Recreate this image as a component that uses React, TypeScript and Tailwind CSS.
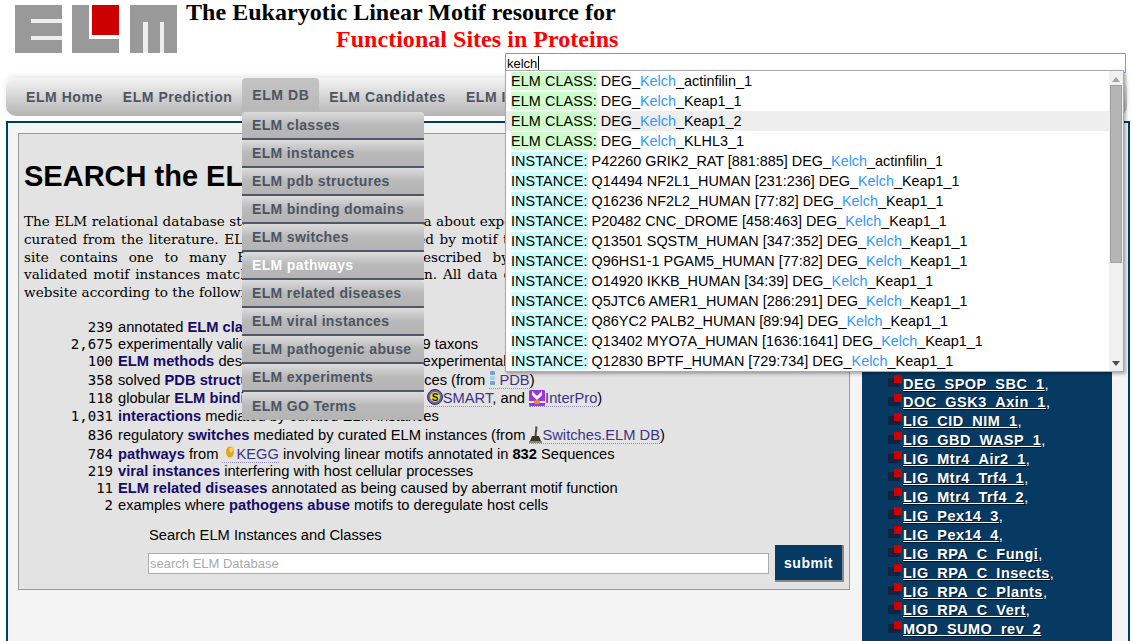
import { Fragment } from "react";

const navItems = ["ELM Home", "ELM Prediction", "ELM DB", "ELM Candidates", "ELM Interactions", "ELM Downloads"];

const menuItems = [
  "ELM classes",
  "ELM instances",
  "ELM pdb structures",
  "ELM binding domains",
  "ELM switches",
  "ELM pathways",
  "ELM related diseases",
  "ELM viral instances",
  "ELM pathogenic abuse",
  "ELM experiments",
  "ELM GO Terms",
];

const results = [
  { kind: "class", pre: "DEG_", post: "_actinfilin_1" },
  { kind: "class", pre: "DEG_", post: "_Keap1_1" },
  { kind: "class", pre: "DEG_", post: "_Keap1_2", active: true },
  { kind: "class", pre: "DEG_", post: "_KLHL3_1" },
  { kind: "inst", pre: "P42260 GRIK2_RAT [881:885] DEG_", post: "_actinfilin_1" },
  { kind: "inst", pre: "Q14494 NF2L1_HUMAN [231:236] DEG_", post: "_Keap1_1" },
  { kind: "inst", pre: "Q16236 NF2L2_HUMAN [77:82] DEG_", post: "_Keap1_1" },
  { kind: "inst", pre: "P20482 CNC_DROME [458:463] DEG_", post: "_Keap1_1" },
  { kind: "inst", pre: "Q13501 SQSTM_HUMAN [347:352] DEG_", post: "_Keap1_1" },
  { kind: "inst", pre: "Q96HS1-1 PGAM5_HUMAN [77:82] DEG_", post: "_Keap1_1" },
  { kind: "inst", pre: "O14920 IKKB_HUMAN [34:39] DEG_", post: "_Keap1_1" },
  { kind: "inst", pre: "Q5JTC6 AMER1_HUMAN [286:291] DEG_", post: "_Keap1_1" },
  { kind: "inst", pre: "Q86YC2 PALB2_HUMAN [89:94] DEG_", post: "_Keap1_1" },
  { kind: "inst", pre: "Q13402 MYO7A_HUMAN [1636:1641] DEG_", post: "_Keap1_1" },
  { kind: "inst", pre: "Q12830 BPTF_HUMAN [729:734] DEG_", post: "_Keap1_1" },
];

const sideLinks = [
  ["DEG_SPOP_SBC_1", ","],
  ["DOC_GSK3_Axin_1", ","],
  ["LIG_CID_NIM_1", ","],
  ["LIG_GBD_WASP_1", ","],
  ["LIG_Mtr4_Air2_1", ","],
  ["LIG_Mtr4_Trf4_1", ","],
  ["LIG_Mtr4_Trf4_2", ","],
  ["LIG_Pex14_3", ","],
  ["LIG_Pex14_4", ","],
  ["LIG_RPA_C_Fungi", ","],
  ["LIG_RPA_C_Insects", ","],
  ["LIG_RPA_C_Plants", ","],
  ["LIG_RPA_C_Vert", ","],
  ["MOD_SUMO_rev_2", ""],
];

const introLines = [
  "The ELM relational database stores functional motifs' data about experimentally validated motifs, which are manually",
  "curated from the literature. ELM classes are so described by motif types, each with a regular expression. Each one",
  "site contains one to many ELM motif's instances described by evidence from experiments, and these are",
  "validated motif instances matching a short protein region. All data can be browsed and searched anywhere on this",
];

function Logo() {
  return (
    <svg width="162" height="48" viewBox="0 0 162 48" className="block shrink-0">
      <rect x="0" y="0" width="47" height="48" fill="#999" />
      <rect x="16" y="14" width="31" height="4" fill="#eee" />
      <rect x="16" y="31" width="31" height="4" fill="#eee" />
      <rect x="57" y="0" width="47" height="48" fill="#999" />
      <rect x="74" y="0" width="30" height="34" fill="#fff" />
      <rect x="77" y="0" width="27" height="30" fill="#c00" />
      <rect x="115" y="0" width="47" height="48" fill="#999" />
      <rect x="128" y="17" width="5" height="31" fill="#eee" />
      <rect x="145" y="17" width="4" height="31" fill="#eee" />
    </svg>
  );
}

function Bullet() {
  return (
    <svg width="15" height="14" viewBox="0 0 15 14" className="-mt-[5px] shrink-0">
      <rect x="0" y="3" width="12" height="9" fill="#12233f" />
      <rect x="6" y="0" width="8" height="8" fill="#c00" />
    </svg>
  );
}

function Link({ children }: { children: string }) {
  return <a className="font-bold text-[#150b6b]">{children}</a>;
}

function ExtLink({ children }: { children: React.ReactNode }) {
  return <a className="border-b border-dotted border-[#8d88bd] text-[#3d3488]">{children}</a>;
}

function PdbIcon() {
  return (
    <svg width="8" height="17" viewBox="0 0 8 17" className="-my-1 mr-[2px] inline-block align-[1px]">
      <rect x="1" y="0" width="5" height="4" rx="1" fill="#6aa5dd" />
      <rect x="1" y="5" width="5" height="4" rx="1" fill="#a9cdee" />
      <rect x="1" y="10" width="5" height="4" rx="1" fill="#6aa5dd" />
    </svg>
  );
}

function SmartIcon() {
  return (
    <svg width="16" height="17" viewBox="0 0 16 17" className="-my-1 inline-block align-[1px]">
      <circle cx="8" cy="8" r="7.5" fill="#6a63b5" stroke="#2d2a5e" />
      <circle cx="8" cy="8" r="5" fill="#e6df2c" />
      <text x="8" y="11.5" textAnchor="middle" fontSize="10" fontWeight="700" fill="#222">S</text>
    </svg>
  );
}

function InterProIcon() {
  return (
    <svg width="16" height="17" viewBox="0 0 16 17" className="-my-1 inline-block align-[0px]">
      <rect x="0" y="0" width="16" height="16" rx="1" fill="#9b35dc" />
      <path d="M3 1 L8 6 L13 1 V5 L8 10 L3 5 Z" fill="#fff" />
      <rect x="0" y="11" width="16" height="2" fill="#f3e6fb" />
      <ellipse cx="8" cy="12" rx="3" ry="2" fill="#f08a1d" />
    </svg>
  );
}

function SwitchIcon() {
  return (
    <svg width="13" height="18" viewBox="0 0 13 18" className="-my-1 inline-block align-[0px]">
      <path d="M6.5 0 L8.5 1 L7.5 10 L5.5 10 Z" fill="#5d4a2d" />
      <path d="M3 10 H10 L12 15 H1 Z" fill="#3e3526" />
      <rect x="0" y="15" width="13" height="2" fill="#8a8578" />
    </svg>
  );
}

function KeggIcon() {
  return (
    <svg width="11" height="13" viewBox="0 0 11 13" className="-my-1 ml-[2px] mr-[1px] inline-block align-[4px]">
      <ellipse cx="6" cy="6" rx="4" ry="5.5" fill="#e3a51a" />
      <ellipse cx="7" cy="4" rx="2" ry="2.5" fill="#f6d35c" />
    </svg>
  );
}

const stats: { n: string; h: string; body: React.ReactNode }[] = [
  { n: "239", h: "h-[17px]", body: <>annotated <Link>ELM classes</Link></> },
  { n: "2,675", h: "h-[17px]", body: <>experimentally validated instances amongst 309 taxons</> },
  { n: "100", h: "h-[19px]", body: <><Link>ELM methods</Link> describing how each motif was experimentally validated</> },
  { n: "358", h: "h-[18px]", body: <>solved <Link>PDB structures</Link> of reported ELM instances (from <ExtLink><PdbIcon />PDB</ExtLink>)</> },
  { n: "118", h: "h-[18px]", body: <>globular <Link>ELM binding domains</Link> (from Pfam, <span className="ml-[15px]" /><ExtLink><SmartIcon />SMART</ExtLink>, and <ExtLink><InterProIcon />InterPro</ExtLink>)</> },
  { n: "1,031", h: "h-[19px]", body: <><Link>interactions</Link> mediated by curated ELM instances</> },
  { n: "836", h: "h-[19px]", body: <>regulatory <Link>switches</Link> mediated by curated ELM instances (from <ExtLink><SwitchIcon />Switches.ELM DB</ExtLink>)</> },
  { n: "784", h: "h-[17px]", body: <><Link>pathways</Link> from <ExtLink><KeggIcon />KEGG</ExtLink> involving linear motifs annotated in <b>832</b> Sequences</> },
  { n: "219", h: "h-[17px]", body: <><Link>viral instances</Link> interfering with host cellular processes</> },
  { n: "11", h: "h-[17px]", body: <><Link>ELM related diseases</Link> annotated as being caused by aberrant motif function</> },
  { n: "2", h: "h-[17px]", body: <>examples where <Link>pathogens abuse</Link> motifs to deregulate host cells</> },
];

export default function App() {
  return (
    <div className="relative h-[641px] w-[1133px] overflow-hidden bg-white font-['Liberation_Sans',sans-serif] text-[14px] text-black">
      {/* header */}
      <header className="flex h-[78px] pl-[15px] pt-[5px]">
        <Logo />
        <div className="ml-[9px] -mt-[6px] font-['Liberation_Serif',serif] text-[24px] font-bold leading-[27px] tracking-[0.03px]">
          <div>The Eukaryotic Linear Motif resource for</div>
          <div className="pl-[150px] text-[#f00]">Functional Sites in Proteins</div>
        </div>
      </header>

      {/* nav */}
      <nav className="relative mx-[6px] flex h-[38px] items-center rounded-[10px] bg-gradient-to-b from-[#f4f4f4] to-[#b4b4b4] pl-[10px] shadow-[0_-2px_6px_rgba(0,0,0,0.1)]">
        {navItems.map((item) => (
          <span
            key={item}
            className={`flex h-[33px] items-center rounded-t-[4px] px-[10px] font-bold tracking-[0.55px] text-[#4b5563] ${
              item === "ELM DB" ? "-mt-[5px] bg-gradient-to-b from-[#c4c4c4] to-[#b8b8b8] pt-[2px]" : ""
            }`}
          >
            {item}
          </span>
        ))}
      </nav>

      {/* main frame */}
      <main className="ml-[6px] mr-[3px] mt-[5px] flex h-[600px] gap-[12px] border-2 border-[#003c64] bg-[#f4f4f4] pl-[10px] pt-[10px]">
        <section className="h-[457px] w-[832px] shrink-0 border border-[#999] bg-[#e3e3e3] pl-[5px] pr-[6px]">
          <h1 className="mt-[26px] whitespace-nowrap text-[29px] font-bold leading-[32px]">SEARCH the ELM Database</h1>
          <div className="mt-[21px] font-['DejaVu_Serif',serif] text-[13.6px] leading-[17.8px]">
            {introLines.map((line) => (
              <p key={line} className="text-justify [text-align-last:justify]">
                {line}
              </p>
            ))}
            <p>website according to the following categories:</p>
          </div>
          <div className="mt-[17px] grid grid-cols-[89px_1fr] items-baseline text-[14.7px] leading-[17px]">
            {stats.map((s) => (
              <Fragment key={s.n}>
                <div className={`${s.h} text-right font-['DejaVu_Sans_Mono',monospace] text-[14px]`}>{s.n}</div>
                <div className={`${s.h} whitespace-nowrap pl-[5px]`}>{s.body}</div>
              </Fragment>
            ))}
          </div>
          <div className="ml-[125px] mt-[13px] text-[14.7px] leading-[17px]">Search ELM Instances and Classes</div>
          <div className="ml-[124px] mt-[1px] flex items-center gap-[6px]">
            <input
              placeholder="search ELM Database"
              className="h-[21px] w-[621px] shrink-0 border border-[#aaa] bg-white px-[1px] text-[13px] placeholder:text-[#aaa]"
            />
            <button className="h-[37px] w-[69px] shrink-0 border-b-2 border-r-2 border-[#888] bg-[#063a62] pt-[2px] text-[14px] font-bold tracking-[0.5px] text-white">
              submit
            </button>
          </div>
        </section>

        <aside className="mt-[190px] w-[250px] shrink-0 bg-[#063a62] pl-[26px] pt-[52px]">
          <ul className="flex flex-col">
            {sideLinks.map(([name, tail]) => (
              <li key={name} className="flex h-[18.92px] items-center text-[14.5px] font-bold text-white">
                <Bullet />
                <span>
                  <a className="tracking-[0.5px] underline [text-shadow:1px_1px_0_#02142a]">{name}</a>
                  <span className="font-normal">{tail}</span>
                </span>
              </li>
            ))}
          </ul>
        </aside>
      </main>

      {/* ELM DB dropdown */}
      <div className="absolute left-[242px] top-[112px] w-[182px]">
        {menuItems.map((item) => (
          <div
            key={item}
            className={`flex h-[28px] items-center rounded-t-[3px] border-b-2 border-[#4f5866] bg-gradient-to-b from-[#dcdcdc] via-[#b9b9b9] to-[#b4b4b4] pl-[10px] font-bold tracking-[0.35px] last:border-b-0 ${
              item === "ELM pathways" ? "text-white" : "text-[#4b5563]"
            }`}
          >
            {item}
          </div>
        ))}
      </div>

      {/* search autocomplete */}
      <div className="absolute left-[505px] top-[53px] w-[621px]">
        <div className="h-[20px] rounded-[1px] border border-[#6d9de0] bg-white pl-[1px] text-[13px] leading-[17px]">
          kelch<span className="ml-[0.5px] inline-block h-[14px] w-px translate-y-[2px] bg-black" />
        </div>
        <div className="relative -mt-[3px] flex h-[302px] w-[619px] border border-[#aaa] bg-white shadow-[2px_2px_3px_rgba(0,0,0,0.3)]">
          <ul className="flex-1 overflow-hidden">
            {results.map((r) => (
              <li
                key={r.pre + r.post}
                className={`flex h-[20px] items-center whitespace-pre pl-[5px] text-[14.4px] leading-[18px] ${r.active ? "bg-[#eee]" : ""}`}
              >
                <span className={`tracking-[0.1px] ${r.kind === "class" ? "bg-[#ccffcc]" : "bg-[#ccffff]"}`}>
                  {r.kind === "class" ? "ELM CLASS:" : "INSTANCE:"}
                </span>
                <span> {r.pre}</span>
                <span className="text-[#3399ff]">Kelch</span>
                <span>{r.post}</span>
              </li>
            ))}
          </ul>
          <div className="flex w-[14px] flex-col items-center bg-[#f1f1f1]">
            <div className="mt-[6px] h-0 w-0 border-x-[4px] border-b-[5px] border-x-transparent border-b-[#a3a3a3]" />
            <div className="mt-[3px] h-[178px] w-[12px] border border-[#a0a0a0] bg-[#b5b5b5]" />
            <div className="mb-[5px] mt-auto h-0 w-0 border-x-[4px] border-t-[5px] border-x-transparent border-t-[#505050]" />
          </div>
        </div>
      </div>
    </div>
  );
}
